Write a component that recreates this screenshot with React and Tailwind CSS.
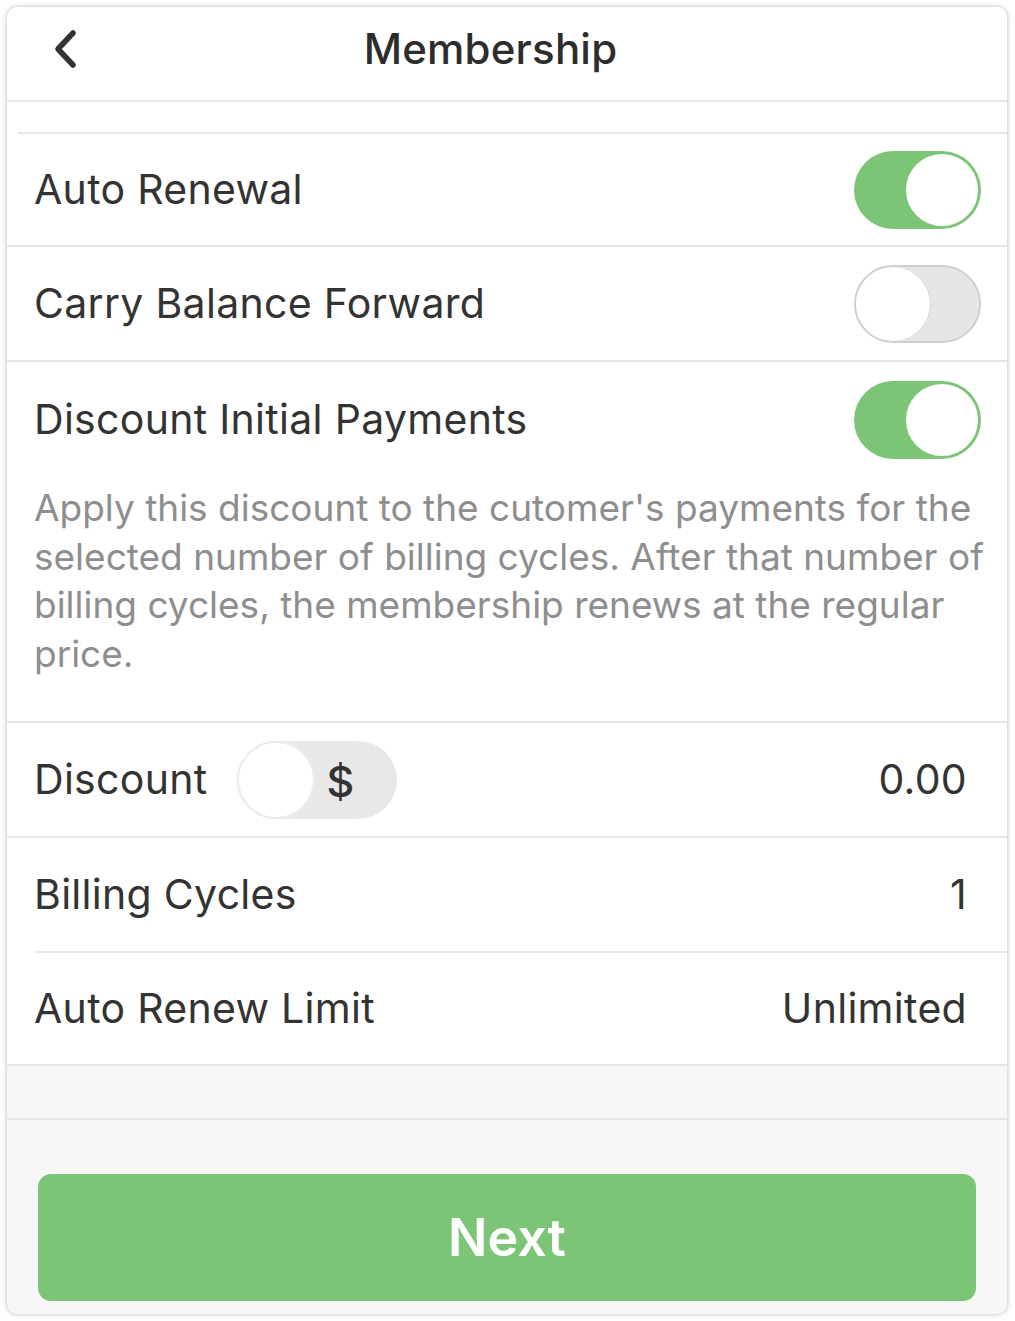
import React from "react";

function Toggle({ on }) {
  if (on) {
    return (
      <div className="relative w-[127px] h-[78px] rounded-full bg-[#7cc576]">
        <div className="absolute right-[1px] top-[1px] w-[76px] h-[76px] rounded-full bg-white border-2 border-[#7cc576]" />
      </div>
    );
  }
  return (
    <div className="relative w-[127px] h-[78px] rounded-full bg-[#e6e6e6] border-2 border-[#cfcfcf]">
      <div className="absolute left-0 top-0 w-[74px] h-[74px] rounded-full bg-white shadow-[1px_0_1px_rgba(0,0,0,0.08)]" />
    </div>
  );
}

export default function App() {
  const font = { fontFamily: "Inter, 'Noto Sans', sans-serif" };
  const label = "text-[41px] tracking-[0.3px]";
  return (
    <div className="w-[1015px] h-[1321px] bg-white pt-[7px] pl-[7px] pr-[8px] pb-[7px]" style={font}>
      <div className="flex flex-col h-full rounded-[10px] overflow-hidden bg-[#f7f7f7] shadow-[0_0_5px_rgba(0,0,0,0.3)] text-[#333]">
        {/* Header */}
        <div className="relative flex items-center justify-center h-[95px] bg-white border-b-2 border-[#e6e6e6] shrink-0">
          <svg className="absolute left-[39px] top-[21px]" width="34" height="42" viewBox="0 0 34 42" fill="none">
            <path d="M27 5 L12 21 L27 37" stroke="#333" strokeWidth="5.5" strokeLinecap="round" strokeLinejoin="round" />
          </svg>
          <div className="text-[42px] font-medium tracking-[0.2px] text-[#2d2d2d] -mt-[10px] pr-[33px]">Membership</div>
        </div>
        <div className="bg-white shrink-0">
          <div className="h-[30px]" />
          <div className="ml-[11px] border-t-2 border-[#e6e6e6]" />
          {/* Auto Renewal */}
          <div className="flex items-center justify-between h-[113px] pl-[27px] pr-[26px] border-b-2 border-[#e6e6e6]">
            <span className={label}>Auto Renewal</span>
            <Toggle on />
          </div>
          {/* Carry Balance */}
          <div className="flex items-center justify-between h-[115px] pl-[27px] pr-[26px] border-b-2 border-[#e6e6e6]">
            <span className={label}>Carry Balance Forward</span>
            <Toggle on={false} />
          </div>
          {/* Discount Initial Payments */}
          <div className="pl-[27px] pr-[26px] pt-[19px] pb-[43px] border-b-2 border-[#e6e6e6]">
            <div className="flex items-center justify-between h-[78px]">
              <span className={label}>Discount Initial Payments</span>
              <Toggle on />
            </div>
            <p className="mt-[25px] mr-[-16px] text-[37px] leading-[48.5px] text-[#8e8e8e]">
              Apply this discount to the cutomer's payments for the selected number of billing cycles. After that number of billing cycles, the membership renews at the regular price.
            </p>
          </div>
          {/* Discount */}
          <div className="flex items-center justify-between h-[115px] pl-[27px] pr-[40px] border-b-2 border-[#e6e6e6]">
            <div className="flex items-center">
              <span className={label}>Discount</span>
              <div className="relative ml-[30px] w-[160px] h-[78px] rounded-full bg-[#e8e8e8]">
                <div className="absolute left-0 top-0 w-[78px] h-[78px] rounded-full bg-white border-2 border-[#ececec]" />
                <span className="absolute left-[89px] top-[8px] text-[43px] font-medium text-[#333]">$</span>
              </div>
            </div>
            <span className={label}>0.00</span>
          </div>
          {/* Billing Cycles */}
          <div className="flex items-center justify-between h-[113px] pl-[27px] pr-[40px]">
            <span className={label}>Billing Cycles</span>
            <span className={label}>1</span>
          </div>
          <div className="ml-[29px] border-t-2 border-[#e6e6e6]" />
          {/* Auto Renew Limit */}
          <div className="flex items-center justify-between h-[113px] pl-[27px] pr-[40px] border-b-2 border-[#e6e6e6]">
            <span className={label}>Auto Renew Limit</span>
            <span className={label}>Unlimited</span>
          </div>
        </div>
        <div className="h-[54px] shrink-0 border-b-2 border-[#e6e6e6]" />
        <div className="flex-1 flex flex-col justify-end px-[31px] pb-[13px]">
          <button className="h-[127px] w-full rounded-[13px] bg-[#7cc576] text-white text-[52px] font-semibold">
            Next
          </button>
        </div>
      </div>
    </div>
  );
}
